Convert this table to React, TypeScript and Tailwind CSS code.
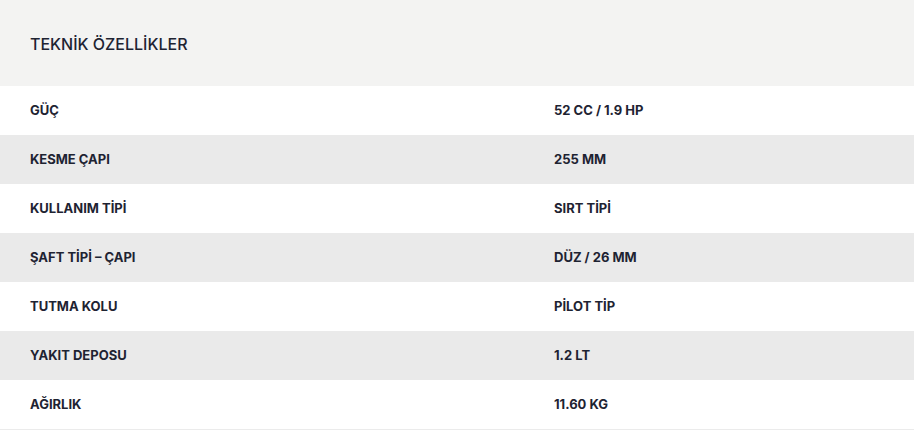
const specs = [
  { label: "GÜÇ", value: "52 CC / 1.9 HP" },
  { label: "KESME ÇAPI", value: "255 MM" },
  { label: "KULLANIM TİPİ", value: "SIRT TİPİ" },
  { label: "ŞAFT TİPİ – ÇAPI", value: "DÜZ / 26 MM" },
  { label: "TUTMA KOLU", value: "PİLOT TİP" },
  { label: "YAKIT DEPOSU", value: "1.2 LT" },
  { label: "AĞIRLIK", value: "11.60 KG" },
];

const App = () => {
  return (
    <div className="w-[914px] bg-white text-[#1e2332] font-['Inter',sans-serif]">
      <div className="h-[86px] bg-[#f3f3f2] flex items-center px-[30px] pt-[2px]">
        <h3 className="text-[16px] font-medium">TEKNİK ÖZELLİKLER</h3>
      </div>
      <div className="border-b border-[#ebebeb]">
        {specs.map(({ label, value }, index) => (
          <div
            key={label}
            className={`grid grid-cols-[524px_1fr] h-[49px] items-center text-[13px] font-bold ${
              index % 2 === 1 ? "bg-[#eaeaea]" : "bg-white"
            }`}
          >
            <div className="pl-[30px]">{label}</div>
            <div className="pl-[30px]">{value}</div>
          </div>
        ))}
      </div>
    </div>
  );
};

export default App;
